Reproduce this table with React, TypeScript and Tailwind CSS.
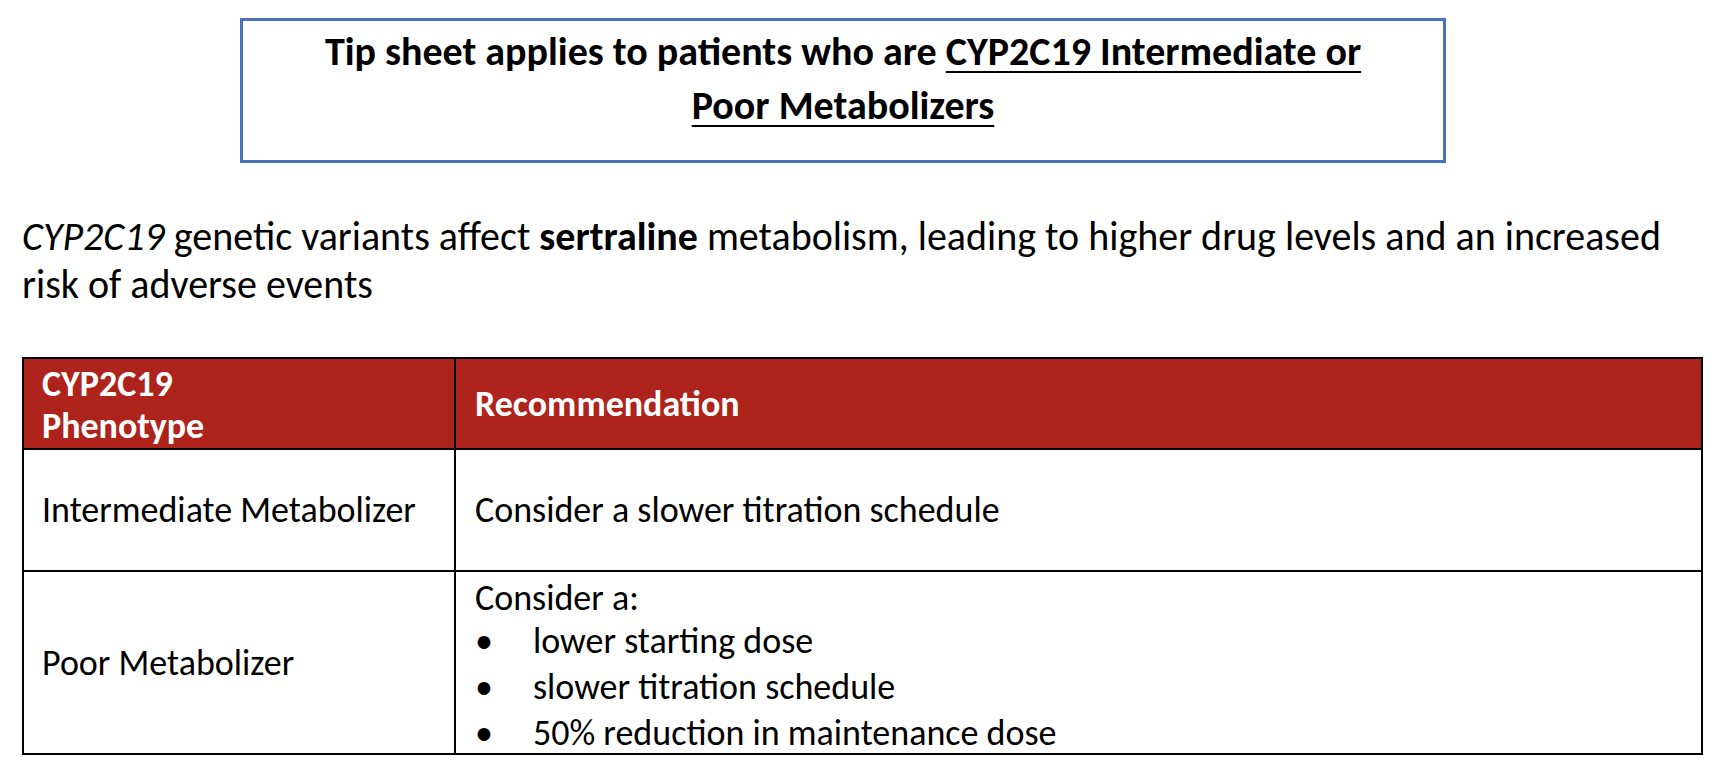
const font = { fontFamily: "Carlito, Lato, 'Liberation Sans', sans-serif" };

function Bullet({ children }: { children: React.ReactNode }) {
    return (
        <li className="flex items-center h-[46px]">
            <span className="w-[58px] text-[36px] leading-none">•</span>
            <span>{children}</span>
        </li>
    )
}

export default function App() {
    return (
        <div className="w-[1724px] h-[776px] bg-white text-black overflow-hidden" style={font}>
            <div className="ml-[240px] mt-[18px] w-[1206px] h-[145px] border-[3px] border-[#4a72b8] pt-[4px] text-center text-[40px] font-bold leading-[54px]">
                <p>
                    Tip sheet applies to patients who are <span className="underline decoration-2 underline-offset-[6px]">CYP2C19 Intermediate or</span>
                </p>
                <p>
                    <span className="underline decoration-2 underline-offset-[6px]">Poor Metabolizers</span>
                </p>
            </div>

            <p className="ml-[22px] mt-[50px] w-[1660px] text-[40px] leading-[48px]">
                <i>CYP2C19</i> genetic variants affect <b>sertraline</b> metabolism, leading to higher drug levels and an increased risk of adverse events
            </p>

            <div className="ml-[22px] mt-[48px] w-[1681px] border-2 border-black text-[36px]">
                <div className="flex h-[91px] bg-[#ae231b] text-white font-bold border-b-2 border-black">
                    <div className="w-[432px] border-r-2 border-black px-[18px] flex flex-col justify-center leading-[42px] pt-[2px]">
                        <span>CYP2C19</span>
                        <span>Phenotype</span>
                    </div>
                    <div className="flex-1 px-[19px] flex items-center">Recommendation</div>
                </div>
                <div className="flex h-[122px] border-b-2 border-black">
                    <div className="w-[432px] border-r-2 border-black px-[18px] flex items-center">Intermediate Metabolizer</div>
                    <div className="flex-1 px-[19px] flex items-center">Consider a slower titration schedule</div>
                </div>
                <div className="flex h-[181px]">
                    <div className="w-[432px] border-r-2 border-black px-[18px] flex items-center">Poor Metabolizer</div>
                    <div className="flex-1 px-[19px] flex flex-col">
                        <span className="h-[40px] leading-[40px] mt-[6px]">Consider a:</span>
                        <ul>
                            <Bullet>lower starting dose</Bullet>
                            <Bullet>slower titration schedule</Bullet>
                            <Bullet>50% reduction in maintenance dose</Bullet>
                        </ul>
                    </div>
                </div>
            </div>
        </div>
    )
}
